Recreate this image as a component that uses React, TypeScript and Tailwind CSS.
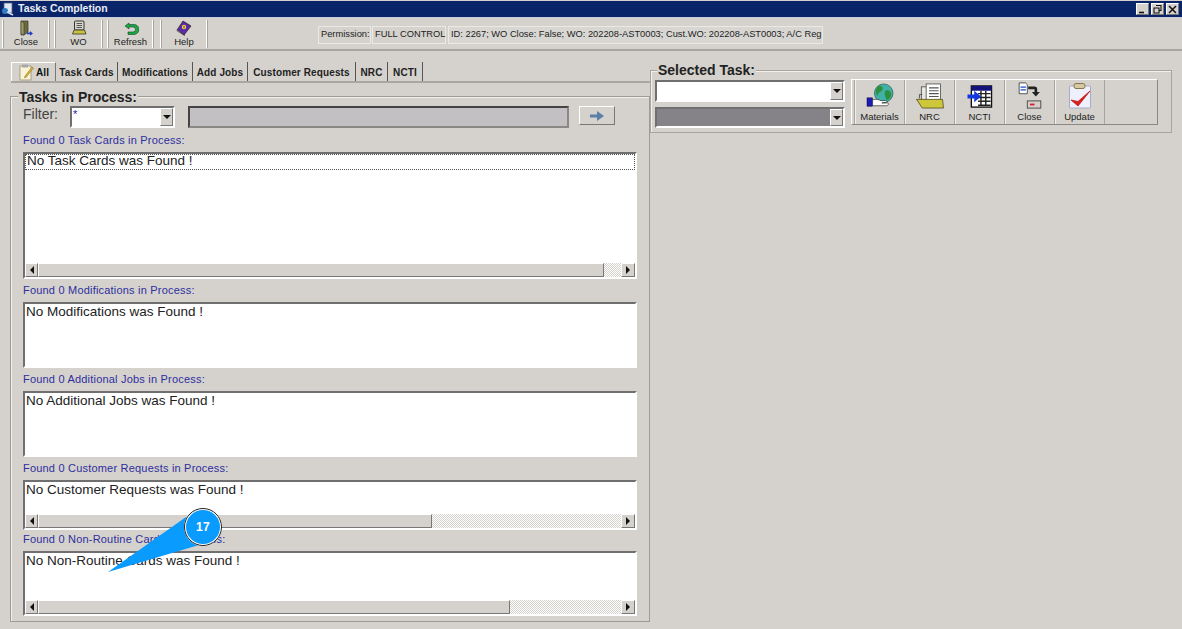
import type { ReactNode } from 'react';

const CloseIcon = () => (
    <svg width="16" height="16" viewBox="0 0 16 16">
        <path d="M3 1h7v11l-4 3H3z" fill="#6b6a3c" stroke="#333" strokeWidth="0.7" />
        <path d="M3 1l3 2v12l-3-1z" fill="#9a9860" stroke="#333" strokeWidth="0.5" />
        <path d="M9 12.5h3V11l3 2.5-3 2.2v-1.5H9z" fill="#1d3fc4" />
    </svg>
);

const WoIcon = () => (
    <svg width="16" height="16" viewBox="0 0 16 16">
        <rect x="3.5" y="1" width="9.5" height="9" rx="1" fill="#d8d8d0" stroke="#333" />
        <path d="M5.5 3.5h5.5M5.5 5.5h5.5M5.5 7.5h5.5" stroke="#333" strokeWidth="0.8" />
        <path d="M3 10h10.5l1.5 4H1.5z" fill="#c9c23a" stroke="#333" strokeWidth="0.8" />
    </svg>
);

const RefreshIcon = () => (
    <svg width="16" height="14" viewBox="0 0 16 14">
        <path d="M6 1L2 4l4 3V5h4a2 2 0 010 5H5v2.5h6a4.5 4.5 0 000-10H6z" fill="#18a83c" stroke="#143" strokeWidth="0.6" />
    </svg>
);

const HelpIcon = () => (
    <svg width="18" height="16" viewBox="0 0 18 16">
        <path d="M8 1l8 5-7 9-7-5z" fill="#5a2aa8" stroke="#221" strokeWidth="0.7" />
        <path d="M2 10l7 5 1 .5-8-4.5z" fill="#f2eedd" stroke="#333" strokeWidth="0.5" />
        <circle cx="9" cy="7" r="2.2" fill="#f3d23c" />
        <path d="M9 5.8v2.4" stroke="#402090" strokeWidth="0.9" />
    </svg>
);

const MaterialsIcon = () => (
    <svg width="30" height="26" viewBox="0 0 30 28">
        <circle cx="19" cy="11" r="10" fill="#3fb1a6" stroke="#33605a" strokeWidth="0.8" />
        <path d="M14 3c4 0 5 3 3 5s-5 2-4 6c-3-1-4-8 1-11zM21 8c3-1 6 1 6 4s-2 6-5 6c-1-3-3-7-1-10z" fill="#2d8f3c" />
        <rect x="1" y="16" width="6" height="9" fill="#1a1ab8" stroke="#102" strokeWidth="0.5" />
        <path d="M7 18c4-1 7 0 9 1h5c2 0 2 2 0 2l-4 .5h6c2 0 1 3-1 3H7z" fill="#fff" stroke="#222" strokeWidth="0.7" />
    </svg>
);

const NrcIcon = () => (
    <svg width="30" height="26" viewBox="0 0 30 27">
        <rect x="6" y="4" width="7" height="16" fill="#e8e8e0" stroke="#444" strokeWidth="0.8" />
        <rect x="11" y="1" width="15" height="19" fill="#fff" stroke="#444" strokeWidth="0.8" />
        <path d="M14 5h10M14 8h10M14 11h10M14 14h10" stroke="#555" strokeWidth="1.2" />
        <path d="M7 12h-3l0 4" fill="none" stroke="#555" />
        <path d="M1 17h27l1 9H7z" fill="#cfc73a" stroke="#4a4720" strokeWidth="0.8" />
    </svg>
);

const NctiIcon = () => (
    <svg width="28" height="25" viewBox="0 0 28 26">
        <rect x="5" y="2" width="21" height="22" fill="#fff" stroke="#111" strokeWidth="1.4" />
        <rect x="5" y="2" width="21" height="5" fill="#12127a" />
        <path d="M12 10h13M12 14h13M12 18h13M12 22h13M15 7v16M20 7v16" stroke="#222" strokeWidth="1.5" />
        <path d="M1 11h7V7l7 6-7 6v-4H1z" fill="#1238e0" />
    </svg>
);

const CloseTaskIcon = () => (
    <svg width="28" height="27" viewBox="0 0 28 30">
        <path d="M2 1h7l2 2v10H2z" fill="#fff" stroke="#222" strokeWidth="0.8" />
        <path d="M3.5 5h6v1.5h-6zM3.5 8h6v1.5h-6z" fill="#1a50d0" />
        <path d="M12 5h7a3 3 0 013 3v3h3l-4.5 5L16 11h3V8h-7z" fill="#222" />
        <rect x="11" y="21" width="15" height="8" fill="#d4d0c8" stroke="#444" />
        <rect x="14" y="24" width="5" height="2" fill="#d81c40" />
    </svg>
);

const UpdateIcon = () => (
    <svg width="24" height="26" viewBox="0 0 24 26">
        <rect x="1.5" y="3" width="21" height="22" rx="1" fill="#eef1fb" stroke="#a4acc8" />
        <rect x="6" y="0.5" width="11" height="5" rx="2" fill="#d8c8a0" stroke="#867650" />
        <path d="M3 17l7 6L22 8 10 18.5z" fill="#d8201e" stroke="#c01816" strokeWidth="0.8" />
    </svg>
);

const NoteIcon = () => (
    <svg width="17" height="17" viewBox="0 0 17 17">
        <rect x="2" y="2" width="11" height="14" fill="#fbf3d8" stroke="#998f70" strokeWidth="0.8" />
        <rect x="4" y="0.5" width="6" height="3" fill="#a8a8a8" />
        <path d="M7 12l7-9 1.5 1-7 9-2 1z" fill="#e0b030" stroke="#807030" strokeWidth="0.5" />
    </svg>
);

const AppIcon = () => (
    <svg width="14" height="14" viewBox="0 0 14 14">
        <rect x="3" y="1" width="8" height="10" fill="#dfe6f4" stroke="#51617f" strokeWidth="0.8" />
        <circle cx="4" cy="9" r="3" fill="#2f7fc0" />
        <path d="M6 10l6 3" stroke="#cfd8e8" strokeWidth="1.6" />
    </svg>
);

const Arrow = ({ dir }: { dir: 'left' | 'right' | 'down' }) => {
    const points = dir === 'left' ? '5,1 5,9 1,5' : dir === 'right' ? '1,1 1,9 5,5' : '1,1 9,1 5,5';
    return (
        <svg width={dir === 'down' ? 10 : 6} height={dir === 'down' ? 6 : 10} viewBox={dir === 'down' ? '0 0 10 6' : '0 0 6 10'}>
            <polygon points={points} fill="#111" />
        </svg>
    );
};

const raised = 'border border-t-white border-l-white border-r-[#777] border-b-[#777] bg-[#d5d2cd]';
const sunken = 'border-2 border-t-[#6f6f6f] border-l-[#6f6f6f] border-r-white border-b-white';

function ToolButton({ label, width, children }: { label: string; width: string; children: ReactNode }) {
    return (
        <div className={`flex flex-col items-center ${width}`}>
            <div className="h-[17px] flex items-end justify-center">{children}</div>
            <span className="text-[9.5px] leading-[12px] text-[#222]">{label}</span>
        </div>
    );
}

const Grip = () => (
    <div className="w-[2px] self-stretch border-l border-r border-l-white border-r-[#a8a59f]" />
);

function Combo({ dark, small, width, children }: { dark?: boolean; small?: boolean; width: string; children?: ReactNode }) {
    return (
        <div className={`${width} ${small ? 'h-[21px]' : 'h-[22px]'} flex ${sunken} ${dark ? 'bg-[#858387]' : 'bg-white'}`}>
            <div className="flex-1 pl-[1px] text-[11px] leading-[12px] text-[#2222aa]">{children}</div>
            <div className={`w-[13px] flex items-center justify-center ${raised}`}>
                <Arrow dir="down" />
            </div>
        </div>
    );
}

function ScrollBar({ thumb }: { thumb: string }) {
    return (
        <div className="h-[14px] flex bg-[repeating-conic-gradient(#d5d2cd_0_25%,#fff_0_50%)] bg-[length:2px_2px]">
            <div className={`w-[13px] flex items-center justify-center ${raised}`}>
                <Arrow dir="left" />
            </div>
            <div className={`${thumb} ${raised}`} />
            <div className="flex-1" />
            <div className={`w-[14px] flex items-center justify-center ${raised}`}>
                <Arrow dir="right" />
            </div>
        </div>
    );
}

function TaskList({ label, empty, height, thumb, focus, className }: { label: string; empty: string; height: string; thumb?: string; focus?: boolean; className?: string }) {
    return (
        <div className={`flex flex-col ${className ?? ''}`}>
            <div className="h-[11px] -mt-[1px] text-[11px] leading-[11px] tracking-[0.2px] text-[#2e2e9e] whitespace-nowrap">{label}</div>
            <div className={`mt-[6px] w-[614px] ${height} flex flex-col bg-white ${sunken}`}>
                <div className={`flex-1 text-[13.5px] text-[#222] ${focus ? 'leading-[12px]' : 'pl-[1px] leading-[16px]'}`}>
                    <div className={focus ? 'h-[16px] pl-[1px] border border-dotted border-[#555]' : ''}>{empty}</div>
                </div>
                {thumb && <ScrollBar thumb={thumb} />}
            </div>
        </div>
    );
}

const tabs = [
    { label: 'Task Cards', width: 'w-[62px]' },
    { label: 'Modifications', width: 'w-[75px]' },
    { label: 'Add Jobs', width: 'w-[55px]' },
    { label: 'Customer Requests', width: 'w-[108px]' },
    { label: 'NRC', width: 'w-[32px]' },
    { label: 'NCTI', width: 'w-[35px]' },
];

export default function App() {
    return (
        <div className="relative w-[1182px] h-[629px] overflow-hidden flex flex-col bg-[#d5d2cd] font-['Liberation_Sans',Arial,sans-serif]">
            <div className="h-[17px] mt-[1px] flex items-center bg-[#0a246a] border-b border-[#c8ccd8] shrink-0">
                <div className="ml-[1px] w-[15px] flex items-center">
                    <AppIcon />
                </div>
                <span className="ml-[2px] text-[10.5px] font-bold text-[#e8ecf4]">Tasks Completion</span>
                <div className="ml-auto mr-[3px] flex gap-[1px]">
                    <div className={`w-[13px] h-[12px] flex items-center justify-center ${raised}`}>
                        <svg width="9" height="9" viewBox="0 0 9 9">
                            <path d="M1 7.5h5" stroke="#111" strokeWidth="1.6" />
                        </svg>
                    </div>
                    <div className={`w-[13px] h-[12px] ml-[1px] flex items-center justify-center ${raised}`}>
                        <svg width="9" height="9" viewBox="0 0 9 9">
                            <path d="M3 .5h5v5H6.5M1 3h5v5H1z" fill="none" stroke="#111" strokeWidth="1.1" />
                        </svg>
                    </div>
                    <div className={`w-[13px] h-[12px] ml-[1px] flex items-center justify-center ${raised}`}>
                        <svg width="9" height="9" viewBox="0 0 9 9">
                            <path d="M1 1l7 7M8 1L1 8" stroke="#111" strokeWidth="1.5" />
                        </svg>
                    </div>
                </div>
            </div>

            <div className="h-[33px] shrink-0 flex items-center border-b-2 border-[#a8a59f]">
                <div className="flex items-center h-[28px] ml-[2px]">
                    <Grip />
                    <ToolButton label="Close" width="w-[44px]"><CloseIcon /></ToolButton>
                    <Grip />
                    <div className="w-[4px]" />
                    <Grip />
                    <ToolButton label="WO" width="w-[45px]"><WoIcon /></ToolButton>
                    <Grip />
                    <div className="w-[4px]" />
                    <Grip />
                    <ToolButton label="Refresh" width="w-[43px]"><RefreshIcon /></ToolButton>
                    <Grip />
                    <div className="w-[6px]" />
                    <Grip />
                    <ToolButton label="Help" width="w-[44px]"><HelpIcon /></ToolButton>
                    <Grip />
                </div>
                <div className="ml-[110px] mt-[2px] flex items-stretch h-[18px] text-[9.3px] leading-[15px] text-[#222] whitespace-nowrap">
                    <div className="w-[53px] pl-[2px] border border-[#ece9e4]">Permission:</div>
                    <div className="ml-[1px] w-[74px] pl-[2px] border border-[#ece9e4]">FULL CONTROL</div>
                    <div className="ml-[2px] w-[375px] pl-[2px] overflow-hidden border border-[#ece9e4] bg-[#d8d6d2]">
                        ID: 2267; WO Close: False; WO: 202208-AST0003; Cust.WO: 202208-AST0003; A/C Reg:
                    </div>
                </div>
            </div>

            <div className="flex-1 flex">
                <div className="w-[650px] shrink-0 flex flex-col">
                    <div className="mt-[11px] ml-[11px] h-[21px] flex items-stretch border-b-2 border-b-[#aaa7a1] text-[10px] font-bold tracking-[0.12px] text-[#222]">
                        <div className="w-[45px] flex items-center gap-[1px] pl-[6px] border-t border-l border-r border-t-white border-l-white border-r-[#777] text-[#111]">
                            <NoteIcon />
                            <span>All</span>
                        </div>
                        {tabs.map(tab => (
                            <div key={tab.label} className={`${tab.width} pt-[2px] flex items-center justify-center whitespace-nowrap border-r border-r-[#555]`}>
                                {tab.label}
                            </div>
                        ))}
                    </div>

                    <div className="mt-[13px] ml-[10px] h-[526px] border border-[#9e9b96] shadow-[inset_1px_1px_0_#f2f0ec]">
                        <div className="-mt-[8px] ml-[7px] w-fit px-[1px] bg-[#d5d2cd] text-[14px] leading-[16px] font-bold text-[#222]">
                            Tasks in Process:
                        </div>
                        <div className="ml-[12px] mt-[1px] flex items-start">
                            <span className="w-[47px] text-[14px] leading-[16px] text-[#444]">Filter:</span>
                            <Combo width="w-[105px]">*</Combo>
                            <div className="ml-[13px] w-[381px] h-[22px] bg-[#c2c0c2] border-2 border-t-[#444] border-l-[#444] border-r-[#8a8884] border-b-[#8a8884]" />
                            <div className={`ml-[10px] w-[36px] h-[19px] flex items-center justify-center ${raised}`}>
                                <svg width="16" height="10" viewBox="0 0 16 10">
                                    <path d="M1 3.5h7V0l7 5-7 5V6.5H1z" fill="#5c7fa8" />
                                </svg>
                            </div>
                        </div>
                        <div className="ml-[12px] mt-[8px] flex flex-col gap-[8px]">
                            <TaskList label="Found 0 Task Cards in Process:" empty="No Task Cards was Found !" height="h-[127px]" thumb="w-[566px]" focus />
                            <TaskList className="-mt-[1px]" label="Found 0 Modifications in Process:" empty="No Modifications was Found !" height="h-[66px]" />
                            <TaskList className="-mt-[1px]" label="Found 0 Additional Jobs in Process:" empty="No Additional Jobs was Found !" height="h-[66px]" />
                            <TaskList className="-mt-[1px]" label="Found 0 Customer Requests in Process:" empty="No Customer Requests was Found !" height="h-[50px]" thumb="w-[394px]" />
                            <TaskList className="-mt-[3px]" label="Found 0 Non-Routine Cards in Process:" empty="No Non-Routine Cards was Found !" height="h-[65px]" thumb="w-[472px]" />
                        </div>
                    </div>
                </div>

                <div className="flex-1 flex flex-col">
                    <div className="mt-[19px] mr-[10px] h-[63px] border border-[#a8a59f] shadow-[inset_1px_1px_0_#f2f0ec]">
                        <div className="-mt-[8px] ml-[6px] w-fit px-[1px] bg-[#d5d2cd] text-[14px] leading-[15px] font-bold text-[#222]">
                            Selected Task:
                        </div>
                        <div className="ml-[4px] mt-[2px] flex items-start">
                            <div className="flex flex-col gap-[5px]">
                                <Combo width="w-[190px]" />
                                <Combo width="w-[190px]" dark small />
                            </div>
                            <div className="ml-[6px] -mt-[1px] w-[307px] h-[46px] flex items-stretch pl-[2px] border border-t-white border-l-white border-r-[#8a8884] border-b-[#8a8884]">
                                {[
                                    { label: 'Materials', icon: <MaterialsIcon /> },
                                    { label: 'NRC', icon: <NrcIcon /> },
                                    { label: 'NCTI', icon: <NctiIcon /> },
                                    { label: 'Close', icon: <CloseTaskIcon /> },
                                    { label: 'Update', icon: <UpdateIcon /> },
                                ].map(item => (
                                    <div key={item.label} className="w-[50px] flex flex-col items-center border-l border-l-[#a8a59f] shadow-[inset_1px_0_0_#f2f0ec]">
                                        <div className="h-[31px] pb-[2px] flex items-end justify-center">{item.icon}</div>
                                        <span className="text-[9.5px] leading-[12px] text-[#222]">{item.label}</span>
                                    </div>
                                ))}
                                <div className="w-[1px] border-l border-l-[#a8a59f]" />
                            </div>
                        </div>
                    </div>
                </div>
            </div>

            {/* step callout sits on top of the form */}
            <svg className="absolute left-[100px] top-[505px]" width="125" height="72" viewBox="0 0 125 72">
                <polygon points="86,12 99,40 8,67" fill="#0a9bff" />
                <circle cx="103" cy="22" r="18" fill="#0a9bff" stroke="#fff" strokeWidth="2" />
                <circle cx="103" cy="22" r="18.5" fill="none" stroke="#222" strokeWidth="1" />
            </svg>
            <span className="absolute left-[196px] top-[520px] text-[12px] leading-[14px] font-bold text-white tracking-[0.4px]">17</span>
        </div>
    );
}
